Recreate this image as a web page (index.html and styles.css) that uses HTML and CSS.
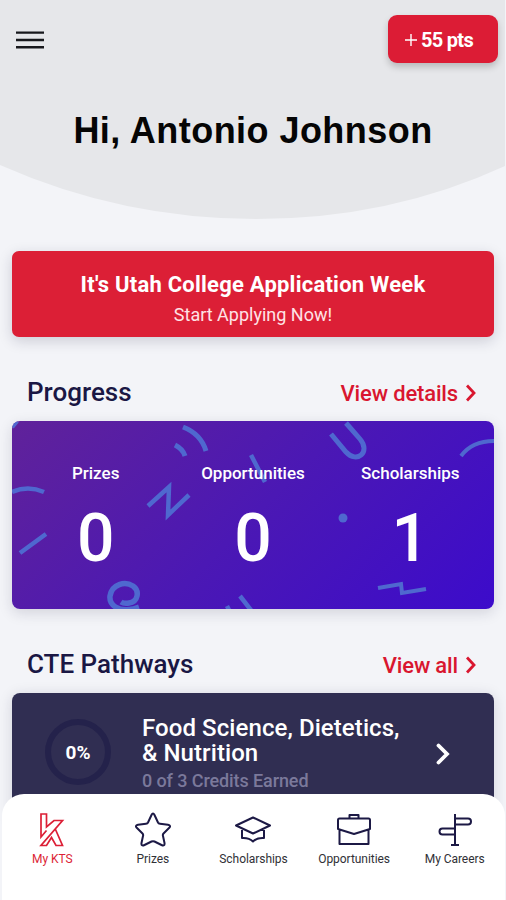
FILE: index.html
```html
<!DOCTYPE html>
<html lang="en">
<head>
    <meta charset="UTF-8">
    <meta name="viewport" content="width=device-width, initial-scale=1.0">
    <title>My KTS</title>
    <link rel="stylesheet" href="styles.css">
</head>
<body>

    <header class="header">
        <svg class="header-curve" viewBox="0 0 505 219" width="505" height="219">
            <path d="M0 0H505V166Q390 219 256 219T0 165Z" fill="#e6e7ea"/>
        </svg>
        <div class="top-bar">
            <button class="menu-button" aria-label="Menu">
                <svg width="28" height="18" viewBox="0 0 28 18" stroke="#17181c" stroke-width="2.4">
                    <path d="M0 1.6H28M0 9H28M0 16.2H28"/>
                </svg>
            </button>
            <div class="points">
                <svg width="12" height="12" viewBox="0 0 12 12" stroke="#fff" stroke-width="1.4"><path d="M0 6H12M6 0V12"/></svg>
                <span class="points-text">55 pts</span>
            </div>
        </div>
        <h1 class="greeting">Hi, Antonio Johnson</h1>
    </header>

    <main class="content">
        <a class="banner" href="#">
            <strong class="banner-title">It's Utah College Application Week</strong>
            <span class="banner-text">Start Applying Now!</span>
        </a>

        <div class="section-head">
            <h2 class="section-title">Progress</h2>
            <a class="section-link" href="#">View details
                <svg width="10" height="18" viewBox="0 0 10 18" fill="none" stroke="#d9162f" stroke-width="2.8"><path d="M1 1.500L8 9L1 16.500"/></svg>
            </a>
        </div>

        <section class="progress-card">
            <!-- confetti -->
            <svg class="confetti" viewBox="0 0 482 188" width="482" height="188" fill="none" stroke="#4f68cf" stroke-width="4.5">
                <path d="M0 6L5 0M0 71Q16 64 32 71M8 132L34 113M136 85L157 66L156 94L177 74"/>
                <path d="M163 24Q171 28 173 35M171 6Q189 13 194 30" stroke-width="5"/>
                <path d="M121 188C106 191 97 184 98 175C100 163 113 160 121 165C128 170 126 181 117 182Q112 183 109 181M121 188L127 186" stroke-width="5.5"/>
                <path d="M239 34L253 61M214 188L218 186M228 175L242 193"/>
                <path d="M319 13L334 31C345 43 359 31 348 18L334 2" stroke-width="5"/>
                <path d="M449 35Q460 20 482 20M366 167L389 163L390 172L414 168" stroke-width="4"/>
                <circle cx="331" cy="97" r="4.5" fill="#4f68cf" stroke="none"/>
            </svg>
            <div class="stat">
                <span class="stat-label">Prizes</span>
                <span class="stat-value">0</span>
            </div>
            <div class="stat">
                <span class="stat-label">Opportunities</span>
                <span class="stat-value">0</span>
            </div>
            <div class="stat">
                <span class="stat-label">Scholarships</span>
                <span class="stat-value">1</span>
            </div>
        </section>

        <div class="section-head section-head-cte">
            <h2 class="section-title">CTE Pathways</h2>
            <a class="section-link" href="#">View all
                <svg width="10" height="18" viewBox="0 0 10 18" fill="none" stroke="#d9162f" stroke-width="2.8"><path d="M1 1.500L8 9L1 16.500"/></svg>
            </a>
        </div>

        <section class="pathway-card">
            <div class="ring">0%</div>
            <div class="pathway-info">
                <h3 class="pathway-title">
                    <span class="title-line">Food Science, Dietetics,</span>
                    <span class="title-line">&amp; Nutrition</span>
                </h3>
                <p class="pathway-credits">0 of 3 Credits Earned</p>
            </div>
            <svg width="14" height="22" viewBox="0 0 14 22" fill="none" stroke="#fff" stroke-width="3.8" stroke-linecap="round"><path d="M2.5 2.5L11 11L2.5 19.5"/></svg>
        </section>
    </main>

    <nav class="tab-bar">
        <a class="tab active" href="#">
            <svg width="36" height="36" viewBox="0 0 36 36" fill="none" stroke="#dc1f36" stroke-width="1.7">
                <path d="M12.500 18.500L7 25V2H12.500V15L20 8.500H28.500L7 33.500H12.500L17.500 25.500L22 33.500H28.500L21.500 17.500"/>
            </svg>
            <span class="tab-label">My KTS</span>
        </a>
        <a class="tab" href="#">
            <svg width="36" height="36" viewBox="0 0 36 36" fill="none" stroke="#1c1945" stroke-width="2" stroke-linejoin="round">
                <path d="M16.500 3Q18 0 19.500 3L23 10.500Q23.500 11.500 25 11.700L33 12.700Q36.500 13.500 34 16L28.500 21.500Q27.500 22.500 28 24L29.500 31Q30 34.500 26.500 33L19.500 29.500Q18 28.800 16.500 29.500L9.500 33Q6 34.500 6.500 31L8 24Q8.500 22.500 7.500 21.500L2 16Q-.5 13.500 3 12.700L11 11.700Q12.500 11.500 13 10.500Z"/>
            </svg>
            <span class="tab-label">Prizes</span>
        </a>
        <a class="tab" href="#">
            <svg width="36" height="36" viewBox="0 0 36 36" fill="none" stroke="#1c1945" stroke-width="2" stroke-linejoin="round">
                <path d="M1 13.500L18 5.500L35 13.500L18 21.500ZM7 16.500V26Q14 25.500 18 29.500Q22 25.500 29 26V16.500"/>
            </svg>
            <span class="tab-label">Scholarships</span>
        </a>
        <a class="tab" href="#">
            <svg width="36" height="36" viewBox="0 0 36 36" fill="none" stroke="#1c1945" stroke-width="2" stroke-linejoin="round">
                <path d="M13.500 6.500V3H22.500V6.500M3.500 6.500H32.500Q34 6.500 34 8V17L18 22L2 17V8Q2 6.500 3.500 6.500ZM3.500 17.500V32H32.500V17.500"/>
            </svg>
            <span class="tab-label">Opportunities</span>
        </a>
        <a class="tab" href="#">
            <svg width="36" height="36" viewBox="0 0 36 36" fill="none" stroke="#1c1945" stroke-width="2">
                <path d="M18 2V33M14 33H22M18 6.500H31Q34 6.500 34 9.500T31 12.500H18M18 16.500H5.500Q2.500 16.500 2.500 19.500T5.500 22.500H18"/>
            </svg>
            <span class="tab-label">My Careers</span>
        </a>
    </nav>

</body>
</html>
```
FILE: styles.css
```css
/* General Styles */
* {
    box-sizing: border-box;
}

body {
    margin: 0;
    width: 506px;
    height: 900px;
    overflow: hidden;
    display: flex;
    flex-direction: column;
    background-color: #f3f4f8;
    font-family: 'Roboto', sans-serif;
    position: relative;
}

h1, h2, h3, p {
    margin: 0;
}

a {
    color: inherit;
    text-decoration: none;
}

svg {
    display: block;
    flex-shrink: 0;
}

/* Header */
.header {
    position: relative;
    height: 251px;
    flex-shrink: 0;
}

.header-curve {
    position: absolute;
    top: 0;
    left: 0;
}

.top-bar {
    position: relative;
    display: flex;
    justify-content: space-between;
    align-items: flex-start;
    padding: 15px 8px 0 16px;
}

.menu-button {
    border: none;
    background: none;
    padding: 0;
    margin-top: 16px;
}

.points {
    display: flex;
    align-items: center;
    gap: 4px;
    width: 110px;
    height: 48px;
    padding: 2px 0 0 17px;
    border-radius: 9px;
    background-color: #dc1c35;
    color: #fff;
    font-size: 20px;
    font-weight: 700;
    box-shadow: 0 4px 7px rgba(0, 0, 0, 0.2);
    white-space: nowrap;
}

.points-text {
    letter-spacing: -0.7px;
}

.greeting {
    position: relative;
    margin-top: 46px;
    text-align: center;
    font-family: 'Liberation Sans', sans-serif;
    font-size: 36px;
    line-height: 44px;
    letter-spacing: 0.45px;
    color: #050505;
    white-space: nowrap;
}

/* Main content */
.content {
    padding: 0 12px;
}

.banner {
    display: flex;
    flex-direction: column;
    align-items: center;
    height: 86px;
    padding-top: 20px;
    border-radius: 7px;
    background-color: #dc1f36;
    color: #fff;
    box-shadow: 0 4px 14px rgba(30, 30, 60, 0.18);
    white-space: nowrap;
}

.banner-title {
    font-size: 22px;
    line-height: 28px;
    font-weight: 700;
    letter-spacing: 0.23px;
}

.banner-text {
    margin-top: 4px;
    font-size: 18px;
    line-height: 24px;
    color: #ffe3e6;
}

.section-head {
    display: flex;
    justify-content: space-between;
    align-items: center;
    height: 84px;
    padding: 25px 18px 0 15px;
    white-space: nowrap;
}

.section-title {
    font-size: 26px;
    font-weight: 500;
    color: #1a1744;
}

.section-link {
    display: flex;
    align-items: center;
    gap: 8px;
    padding-top: 3px;
    font-size: 22px;
    font-weight: 500;
    letter-spacing: -0.15px;
    color: #d9162f;
}

/* Progress card */
.progress-card {
    position: relative;
    display: grid;
    grid-template-columns: 1fr 1fr 1fr;
    height: 188px;
    padding: 41px 5px 0;
    overflow: hidden;
    border-radius: 8px;
    background: linear-gradient(135deg, #60229a 0%, #4b18b4 50%, #3c0bcb 100%);
    color: #fff;
    box-shadow: 0 4px 14px rgba(30, 30, 60, 0.15);
}

.confetti {
    position: absolute;
    top: 0;
    left: 0;
}

.stat {
    position: relative;
    display: flex;
    flex-direction: column;
    align-items: center;
}

.stat-label {
    font-size: 17px;
    line-height: 22px;
    font-weight: 500;
    white-space: nowrap;
}

.stat-value {
    margin-top: 17px;
    font-size: 66px;
    line-height: 76px;
    font-weight: 500;
}

/* Pathway card */
.pathway-card {
    display: flex;
    align-items: flex-start;
    height: 130px;
    padding: 0 44px 0 33px;
    border-radius: 8px;
    background-color: #302e52;
    color: #fff;
    box-shadow: 0 2px 14px rgba(30, 30, 60, 0.15);
}

.pathway-card > svg {
    margin: 50px 0 0 auto;
}

.ring {
    display: flex;
    align-items: center;
    justify-content: center;
    width: 66px;
    height: 66px;
    margin-top: 26px;
    border: 6px solid #24224b;
    border-radius: 50%;
    font-size: 19px;
    font-weight: 700;
}

.pathway-info {
    margin: 23px 0 0 31px;
    white-space: nowrap;
}

.pathway-title {
    font-size: 24px;
    line-height: 25px;
    font-weight: 500;
    letter-spacing: 0.08px;
}

.title-line {
    display: block;
}

.pathway-credits {
    margin-top: 3px;
    font-size: 18px;
    line-height: 24px;
    font-weight: 500;
    letter-spacing: -0.1px;
    color: #7b799b;
}

/* Bottom tabs */
.tab-bar {
    position: absolute;
    left: 2px;
    right: 1px;
    bottom: 0;
    height: 106px;
    display: grid;
    grid-template-columns: repeat(5, 1fr);
    padding-top: 18px;
    border-radius: 22px 22px 0 0;
    background-color: #fff;
}

.tab {
    display: flex;
    flex-direction: column;
    align-items: center;
    color: #303036;
}

.tab.active {
    color: #dc1f36;
}

.tab-label {
    margin-top: 3px;
    font-size: 12px;
    line-height: 16px;
    letter-spacing: -0.05px;
    white-space: nowrap;
}
```
